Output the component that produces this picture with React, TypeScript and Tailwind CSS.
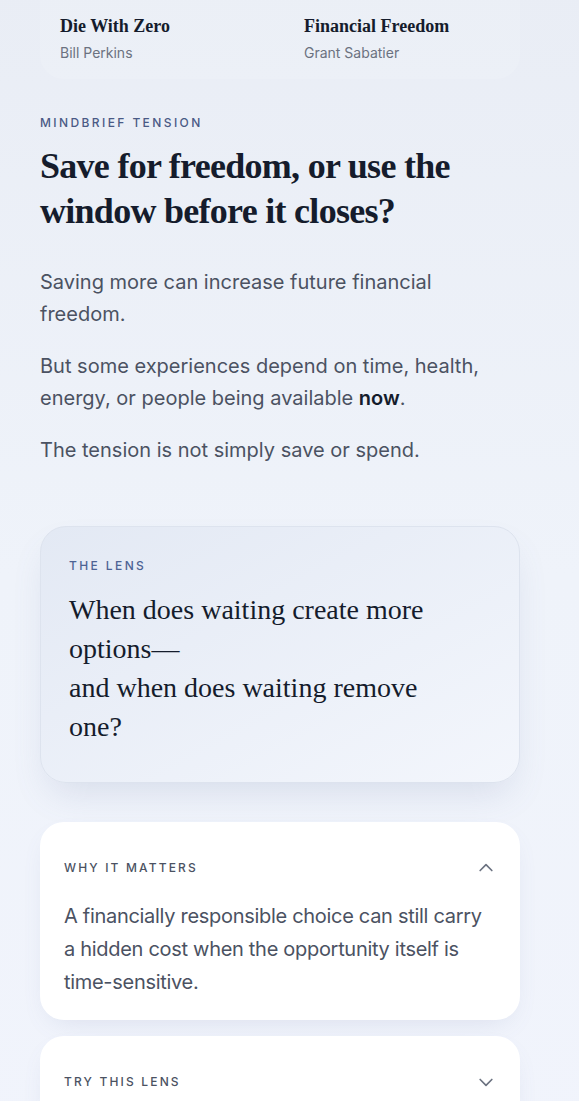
import React from "react";

const serif = { fontFamily: '"Liberation Serif", "DejaVu Serif", serif' };
const sans = { fontFamily: 'Inter, "Noto Sans", sans-serif' };

function Chevron({ up }: { up?: boolean }) {
  return (
    <svg width="20" height="20" viewBox="0 0 24 24" fill="none" stroke="#6b7280" strokeWidth="2" strokeLinecap="round" strokeLinejoin="round">
      {up ? <path d="M5 15l7-7 7 7" /> : <path d="M5 9l7 7 7-7" />}
    </svg>
  );
}

export default function App() {
  return (
    <div
      className="min-h-[1101px] w-full bg-gradient-to-b from-[#e9edf5] via-[#eff3fa] to-[#f1f4fc] px-[40px] text-[#1a2236]"
      style={sans}
    >
      <div className="w-[480px]">
        <div className="-mt-[20px] rounded-[24px] bg-white/10 px-[20px] pb-[16px] pt-[34px]">
          <div className="grid grid-cols-2 gap-x-[48px]">
            <div>
              <div className="text-[18px] font-bold leading-[24px] text-[#151c2c]" style={serif}>Die With Zero</div>
              <div className="mt-[5px] text-[14px] leading-[20px] text-[#6b7280]">Bill Perkins</div>
            </div>
            <div>
              <div className="text-[18px] font-bold leading-[24px] text-[#151c2c]" style={serif}>Financial Freedom</div>
              <div className="mt-[5px] text-[14px] leading-[20px] text-[#6b7280]">Grant Sabatier</div>
            </div>
          </div>
        </div>

        <div className="mt-[36px] text-[12px] font-medium uppercase leading-[16px] tracking-[0.2em] text-[#4a5a85]">Mindbrief Tension</div>
        <h1 className="mt-[13px] text-[36px] font-bold leading-[45px] tracking-[-0.02em] text-[#151c2c]" style={serif}>
          Save for freedom, or use the window before it closes?
        </h1>

        <div className="mt-[32px] text-[20px] leading-[32px] text-[#4b5262]">
          <p>Saving more can increase future financial freedom.</p>
          <p className="mt-[20px]">
            But some experiences depend on time, health, energy, or people being available{" "}
            <span className="font-semibold text-[#151c2c]">now</span>.
          </p>
          <p className="mt-[20px]">The tension is not simply save or spend.</p>
        </div>

        <div className="mt-[60px] rounded-[26px] border border-[#dde3ee] bg-gradient-to-br from-[#e3e9f4] to-[#f3f6fc] px-[28px] pb-[36px] pt-[31px] shadow-[0_18px_36px_-10px_rgba(100,116,160,0.18)]">
          <div className="text-[12px] font-medium uppercase leading-[16px] tracking-[0.2em] text-[#4d6394]">The Lens</div>
          <p className="mt-[16px] max-w-[390px] text-[28px] leading-[39px] text-[#151c2c]" style={serif}>
            When does waiting create more options—
            <br />
            and when does waiting remove one?
          </p>
        </div>

        <div className="mt-[39px] rounded-[24px] bg-white px-[24px] pb-[21px] pt-[36px] shadow-[0_10px_28px_-12px_rgba(100,116,160,0.2)]">
          <div className="flex items-center justify-between">
            <div className="text-[12px] font-medium uppercase leading-[18px] tracking-[0.18em] text-[#4b5262]">Why it matters</div>
            <Chevron up />
          </div>
          <p className="mt-[22px] text-[20px] leading-[33px] tracking-[-0.015em] text-[#4b5262]">
            A financially responsible choice can still carry a hidden cost when the opportunity itself is time-sensitive.
          </p>
        </div>

        <div className="mt-[16px] rounded-[24px] bg-white px-[24px] pb-[36px] pt-[36px] shadow-[0_10px_28px_-12px_rgba(100,116,160,0.2)]">
          <div className="flex items-center justify-between">
            <div className="text-[12px] font-medium uppercase leading-[18px] tracking-[0.18em] text-[#4b5262]">Try this lens</div>
            <Chevron />
          </div>
        </div>
        <div className="h-[40px]" />
      </div>
    </div>
  );
}
